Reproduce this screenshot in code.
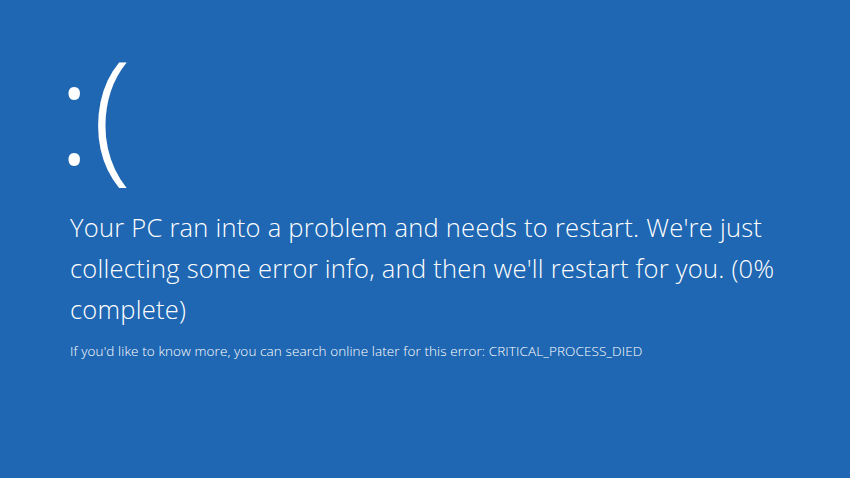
export default function App() {
  return (
    <div
      className="w-[850px] h-[478px] bg-[#1f67b2] text-white pl-[70px] overflow-hidden"
      style={{ fontFamily: '"Open Sans", "Noto Sans", sans-serif' }}
    >
      {/* sad face */}
      <div className="-ml-[13px] pt-[34px] h-[198px] text-[144px] leading-[150px] font-light tracking-[1px]">
        :(
      </div>

      <p className="mt-[9px] w-[750px] text-[25.5px] leading-[41px] font-light tracking-[0.25px]">
        Your PC ran into a problem and needs to restart. We're just collecting some error info, and
        then we'll restart for you. (0% complete)
      </p>

      <p className="mt-[13px] text-[13.5px] leading-[16px] font-light tracking-[0.1px]">
        If you'd like to know more, you can search online later for this error: CRITICAL_PROCESS_DIED
      </p>
    </div>
  );
}
